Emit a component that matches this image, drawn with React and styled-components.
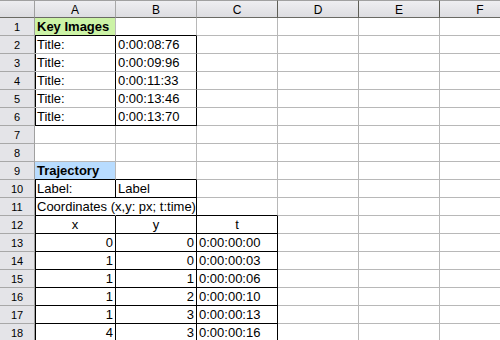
import React from "react";
import styled, { createGlobalStyle } from "styled-components";

const GlobalStyle = createGlobalStyle`
  html, body {
    margin: 0;
    padding: 0;
    background: #ffffff;
    overflow: hidden;
  }
  body {
    font-family: "Liberation Sans", Arial, sans-serif;
  }
`;

const COLS = ["A", "B", "C", "D", "E", "F"];
const GRID = "#b8b8b8";
const INK = "#000000";

const Sheet = styled.div`
  display: grid;
  grid-template-columns: 35px repeat(6, 81px);
  grid-auto-rows: 18px;
  width: 500px;
  height: 340px;
  overflow: hidden;
  font-size: 13px;
  color: #000;
`;

const Corner = styled.div`
  background: linear-gradient(#ededf0, #dcdce0);
  border-top: 1px solid #a0a0a0;
  border-right: 1px solid #a0a0a0;
  border-bottom: 1px solid #6a6a64;
  box-sizing: border-box;
`;

const ColHead = styled.div`
  display: flex;
  align-items: center;
  justify-content: center;
  background: linear-gradient(#eeeef1, #dddde1);
  border-top: 1px solid #a0a0a0;
  border-bottom: 1px solid #6a6a64;
  border-right: 1px solid ${(p) => (p.$dark ? "#5e5e56" : "#a8a8a8")};
  box-sizing: border-box;
  font-size: 12px;
  padding-top: 1px;
`;

const RowHead = styled.div`
  display: flex;
  align-items: center;
  justify-content: center;
  background: #e4e4e8;
  border-right: 1px solid #a0a0a0;
  border-bottom: 1px solid #a8a8a8;
  box-sizing: border-box;
  font-size: 11px;
`;

const Cell = styled.div`
  position: relative;
  display: flex;
  align-items: center;
  justify-content: ${(p) =>
    p.$align === "right" ? "flex-end" : p.$align === "center" ? "center" : "flex-start"};
  padding: 0 2px 0 2px;
  background: ${(p) => p.$bg || "#ffffff"};
  border-right: 1px solid ${(p) => (p.$r ? INK : p.$spill ? p.$bg || "#ffffff" : GRID)};
  border-bottom: 1px solid ${(p) => (p.$b ? INK : GRID)};
  box-shadow: ${(p) => (p.$l ? `inset 1px 0 0 ${INK}` : "none")};
  box-sizing: border-box;
  white-space: nowrap;
  overflow: ${(p) => (p.$spill ? "visible" : "hidden")};
  font-weight: ${(p) => (p.$bold ? "bold" : "normal")};
  z-index: ${(p) => (p.$spill ? 1 : 0)};
  line-height: 1;
`;

const green = "#ccf3a6";
const blue = "#b8dcff";

// each row lists cells for columns A, B, C; everything else is empty
const rows = [
  [
    { v: "Key Images", bold: true, bg: green, b: true },
    { b: true },
  ],
  ...["0:00:08:76", "0:00:09:96", "0:00:11:33", "0:00:13:46", "0:00:13:70"].map((t, i) => [
    { v: "Title:", l: true, r: true, b: i === 4 },
    { v: t, r: true, b: i === 4 },
  ]),
  [],
  [],
  [
    { v: "Trajectory", bold: true, bg: blue, b: true },
    { b: true },
  ],
  [
    { v: "Label:", l: true, r: true, b: true },
    { v: "Label", r: true, b: true },
  ],
  [
    { v: "Coordinates (x,y: px; t:time)", l: true, spill: true, b: true },
    { r: true, b: true },
    { b: true },
  ],
  [
    { v: "x", align: "center", l: true, r: true, b: true },
    { v: "y", align: "center", r: true, b: true },
    { v: "t", align: "center", r: true, b: true },
  ],
  ...[
    [0, 0, "0:00:00:00"],
    [1, 0, "0:00:00:03"],
    [1, 1, "0:00:00:06"],
    [1, 2, "0:00:00:10"],
    [1, 3, "0:00:00:13"],
    [4, 3, "0:00:00:16"],
  ].map(([x, y, t]) => [
    { v: String(x), align: "right", l: true, r: true, b: true },
    { v: String(y), align: "right", r: true, b: true },
    { v: t, r: true, b: true },
  ]),
];

export default function App() {
  return (
    <>
      <GlobalStyle />
      <Sheet>
        <Corner />
        {COLS.map((c, i) => (
          <ColHead key={c} $dark={i >= 2}>
            {c}
          </ColHead>
        ))}
        {rows.map((row, ri) => (
          <React.Fragment key={ri}>
            <RowHead>{ri + 1}</RowHead>
            {COLS.map((c, ci) => {
              const cell = row[ci] || {};
              return (
                <Cell
                  key={c}
                  $align={cell.align}
                  $bold={cell.bold}
                  $bg={cell.bg}
                  $l={cell.l}
                  $r={cell.r}
                  $b={cell.b}
                  $spill={cell.spill}
                >
                  {cell.v}
                </Cell>
              );
            })}
          </React.Fragment>
        ))}
      </Sheet>
    </>
  );
}
